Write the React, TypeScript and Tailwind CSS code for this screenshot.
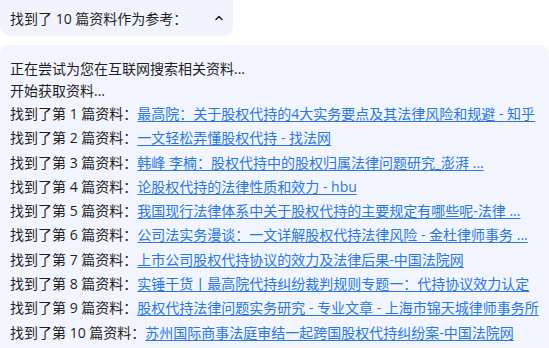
const links = [
  '最高院：关于股权代持的4大实务要点及其法律风险和规避 - 知乎',
  '一文轻松弄懂股权代持 - 找法网',
  '韩峰 李楠：股权代持中的股权归属法律问题研究_澎湃 ...',
  '论股权代持的法律性质和效力 - hbu',
  '我国现行法律体系中关于股权代持的主要规定有哪些呢-法律 ...',
  '公司法实务漫谈：一文详解股权代持法律风险 - 金杜律师事务 ...',
  '上市公司股权代持协议的效力及法律后果-中国法院网',
  '实锤干货丨最高院代持纠纷裁判规则专题一：代持协议效力认定',
  '股权代持法律问题实务研究 - 专业文章 - 上海市锦天城律师事务所',
  '苏州国际商事法庭审结一起跨国股权代持纠纷案-中国法院网',
]

export default function App() {
  return (
    <div
      className="h-[348px] w-[549px] overflow-hidden bg-white text-[14px] text-[#1f1f1f]"
      style={{ fontFamily: '"Open Sans", "Noto Sans CJK SC", sans-serif' }}
    >
      <div className="flex h-[36px] w-[233px] items-center rounded-b-[10px] bg-[#f1f4fc] pl-[10px]">
        <span>找到了 10 篇资料作为参考：</span>
        <svg
          className="ml-[26px]"
          width="12"
          height="12"
          viewBox="0 0 24 24"
          fill="none"
          stroke="#1f1f1f"
          strokeWidth="3"
          strokeLinecap="round"
          strokeLinejoin="round"
        >
          <path d="M6 15l6-6 6 6" />
        </svg>
      </div>

      <div className="mt-[9px] rounded-[8px] bg-[#f2f5fd] px-[10px] pt-[13px] pb-4">
        <div className="leading-[22px]">正在尝试为您在互联网搜索相关资料...</div>
        <div className="leading-[22px]">开始获取资料...</div>
        {links.map((title, i) => (
          <div key={i} className="whitespace-nowrap leading-[24.3px]">
            找到了第 {i + 1} 篇资料：
            <a href="#" className="text-[#2a78de] underline underline-offset-2">
              {title}
            </a>
          </div>
        ))}
      </div>
    </div>
  )
}
